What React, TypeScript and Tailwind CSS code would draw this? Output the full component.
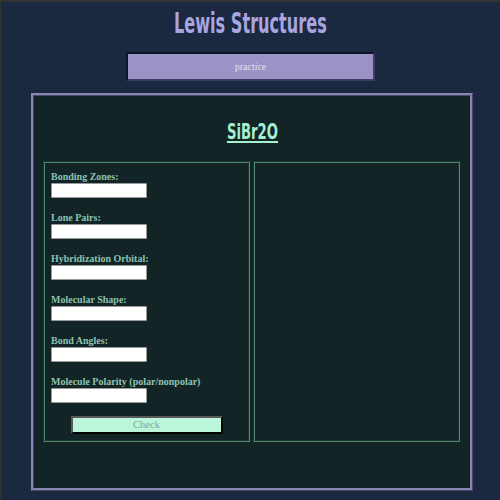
import React from "react";

const serif = { fontFamily: '"Liberation Serif", "DejaVu Serif", serif' };
const cond = { fontFamily: '"DejaVu Sans Condensed", "Liberation Sans", sans-serif' };

const fields = [
  "Bonding Zones:",
  "Lone Pairs:",
  "Hybridization Orbital:",
  "Molecular Shape:",
  "Bond Angles:",
  "Molecule Polarity (polar/nonpolar)",
];

export default function App() {
  return (
    <div className="min-h-[500px] w-[500px] bg-[#1a2940] border-t-2 border-l border-[#333333]">
      <div className="flex justify-center pt-[6px] h-[42px]">
        <h1
          className="text-[28px] leading-[32px] font-bold text-[#a9a5e0] [transform:scaleX(0.64)] whitespace-nowrap"
          style={cond}
        >
          Lewis Structures
        </h1>
      </div>
      <div className="flex justify-center mt-[8px]">
        <button
          className="w-[249px] h-[29px] bg-[#9b93c5] text-[#e4def5] text-[10px] border-t-2 border-l-2 border-b-2 border-r-2 border-t-[#0e1626] border-l-[#0e1626] border-b-[#3d3d66] border-r-[#3d3d66]"
          style={serif}
        >
          practice
        </button>
      </div>
      <div className="ml-[30px] mt-[12px] w-[442px] h-[398px] border-[3px] [border-style:ridge] border-[#8985b6] bg-[#122426] flex flex-col">
        <div className="flex justify-center pt-[24px] h-[48px]">
          <h2
            className="text-[21px] leading-[24px] font-bold text-[#a6eecd] underline underline-offset-[2px] [transform:scaleX(0.7)]"
            style={cond}
          >
            SiBr2O
          </h2>
        </div>
        <div className="flex gap-[3px] ml-[9px] mt-[17px]">
          <div className="w-[207px] border-2 [border-style:groove] border-[#4f8a74] pt-[7px] px-[6px] pb-[6px] flex flex-col">
            {fields.map((f, i) => (
              <div key={f} className={i === 0 ? "flex flex-col" : "flex flex-col mt-[13px]"}>
                <label className="text-[10px] leading-[13px] text-[#8cc3af] font-bold" style={serif}>
                  {f}
                </label>
                <input className="w-[96px] h-[15px] bg-white border border-[#9a9a9a] rounded-[1px]" />
              </div>
            ))}
            <button
              className="mx-auto mt-[13px] w-[152px] h-[18px] bg-[#bbf6da] text-[#7ea897] text-[10.5px] leading-[14px] border-2 [border-style:outset] border-[#5a5a5a]"
              style={serif}
            >
              Check
            </button>
          </div>
          <div className="w-[207px] border-2 [border-style:groove] border-[#4f8a74]" />
        </div>
      </div>
    </div>
  );
}
